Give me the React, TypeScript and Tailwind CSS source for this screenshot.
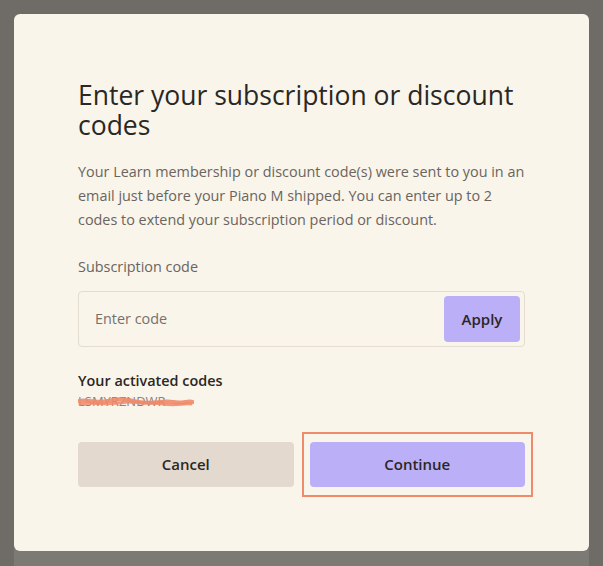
import React from "react";

export default function App() {
  return (
    <div className="w-[603px] h-[566px] bg-[#6f6b67] overflow-hidden px-[14px] pt-[14px]" style={{ fontFamily: "'Open Sans', 'Noto Sans', sans-serif" }}>
      <div className="h-[552px] bg-[linear-gradient(to_bottom,#6f6b67_0,#6f6b67_500px,#7b7a75_500px)]">
        <div className="h-[537px] bg-[#f9f5eb] rounded-[6px] px-[64px] pt-[66px]">
          <h1 className="text-[26.5px] leading-[30px] text-[#2a2724] font-normal">
            Enter your subscription or discount codes
          </h1>
          <p className="mt-[20px] text-[14.4px] leading-[24px] text-[#6b645e] whitespace-nowrap">
            Your Learn membership or discount code(s) were sent to you in an
            <br />
            email just before your Piano M shipped. You can enter up to 2
            <br />
            codes to extend your subscription period or discount.
          </p>
          <div className="mt-[23px] text-[14.4px] leading-[24px] text-[#6b645e]">Subscription code</div>
          <div className="mt-[12px] h-[56px] border border-[#e3dccf] rounded-[4px] flex items-center pl-[16px] pr-[4px]">
            <div className="flex-1 text-[14.4px] text-[#77706a]">Enter code</div>
            <button className="w-[76px] h-[46px] bg-[#bbaff8] rounded-[4px] text-[15px] font-semibold text-[#2a2724]">Apply</button>
          </div>
          <div className="mt-[22px] text-[14.4px] leading-[24px] font-semibold text-[#2a2724]">Your activated codes</div>
          <div className="relative w-fit text-[13px] leading-[16px] text-[#8a8480]">
            LSMYRZNDWR
            <svg className="absolute left-0 top-[3px]" width="116" height="12" viewBox="0 0 116 12">
              <path d="M1 5 C10 3 20 8 30 5 S50 3 60 6 S85 4 95 6 S110 4 115 6" stroke="#ef8a6a" strokeWidth="4" fill="none" strokeLinecap="round" opacity="0.9" />
              <path d="M2 8 C15 6 25 9 40 7 S70 6 85 8 S105 7 113 8" stroke="#ef8a6a" strokeWidth="3" fill="none" strokeLinecap="round" opacity="0.85" />
            </svg>
          </div>
          <div className="mt-[33px] flex gap-[16px]">
            <button className="flex-1 h-[45px] bg-[#e3d9ce] rounded-[4px] text-[15px] font-semibold text-[#2a2724]">Cancel</button>
            <div className="flex-1 relative">
              <button className="w-full h-[45px] bg-[#bbaff8] rounded-[4px] text-[15px] font-semibold text-[#2a2724]">Continue</button>
              <div className="absolute -left-[8px] -right-[8px] -top-[10px] -bottom-[10px] border-2 border-[#ef8a6a] pointer-events-none" />
            </div>
          </div>
        </div>
      </div>
    </div>
  );
}
